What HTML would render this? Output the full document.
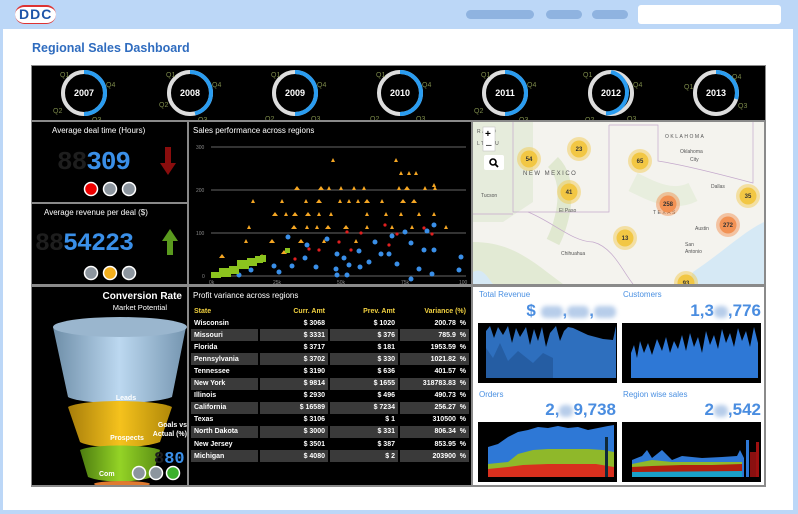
<!DOCTYPE html>
<html><head><meta charset="utf-8"><style>
*{margin:0;padding:0;box-sizing:border-box}
body{width:798px;height:514px;background:#bcd7f7;font-family:"Liberation Sans",sans-serif;position:relative;overflow:hidden}
.a{position:absolute}
.pill{position:absolute;height:9px;border-radius:5px;background:#8fb3e0}
.panel{position:absolute;background:#000}
.t{color:#fff;font-size:8px;position:absolute;white-space:nowrap}
table{border-collapse:collapse;font-size:7px;font-weight:bold;color:#fff;width:100%;table-layout:fixed}
td{height:12.1px;padding:0 3px;border-right:2px solid #000}
tr:nth-child(odd) td{background:#3a3a3a}
tr:nth-child(even) td{background:#000}
td.r{text-align:right}
.lbl{color:#4a90e2;font-size:8px;position:absolute}
.big{color:#4a8de0;font-size:17px;font-weight:bold;position:absolute;text-align:right}
.blur{display:inline-block;width:22px;height:12px;background:#b7cdea;border-radius:5px;filter:blur(2px);vertical-align:middle}
</style></head><body>
<!-- top bar -->
<div class="a" style="left:15px;top:5px;width:41px;height:19px;background:#fff;border-radius:10px;border-top:2px solid #d33;border-bottom:1px solid #d33"></div>
<div class="a" style="left:19px;top:6px;font-weight:bold;font-size:14px;color:#1f55a8;letter-spacing:1px">DDC</div>
<div class="pill" style="left:466px;top:10px;width:68px"></div>
<div class="pill" style="left:546px;top:10px;width:36px"></div>
<div class="pill" style="left:592px;top:10px;width:36px"></div>
<div class="a" style="left:638px;top:5px;width:143px;height:19px;background:#fff;border-radius:3px"></div>
<!-- white sheet -->
<div class="a" style="left:3px;top:29px;width:790px;height:481px;background:#fff"></div>
<div class="a" style="left:32px;top:41px;font-size:12.5px;font-weight:bold;color:#2f6cbf">Regional Sales Dashboard</div>
<!-- dashboard frame -->
<div class="a" style="left:31px;top:65px;width:735px;height:422px;background:#8a8a8a"></div>
<!-- gauges row -->
<div class="panel" style="left:32px;top:66px;width:733px;height:54px"></div>
<svg class="a" style="left:32px;top:66px" width="733" height="54">
<g stroke-width="4" fill="none">
<g transform="translate(52,27)"><circle r="21" stroke="#ddd"/><path d="M0,-21 A21,21 0 0 1 0,21" stroke="#2a9cf0"/><text x="0" y="3" fill="#fff" stroke="none" font-size="9" font-weight="bold" text-anchor="middle">2007</text><text x="-24" y="-16" font-size="7" fill="#7c8a4a" stroke="none">Q1</text><text x="22" y="-6" font-size="7" fill="#7c8a4a" stroke="none">Q4</text><text x="-31" y="20" font-size="7" fill="#7c8a4a" stroke="none">Q2</text><text x="8" y="29" font-size="7" fill="#7c8a4a" stroke="none">Q3</text></g>
<g transform="translate(158,27)"><circle r="21" stroke="#ddd"/><path d="M0,-21 A21,21 0 0 1 5,20.4" stroke="#2a9cf0"/><text x="0" y="3" fill="#fff" stroke="none" font-size="9" font-weight="bold" text-anchor="middle">2008</text><text x="-24" y="-16" font-size="7" fill="#7c8a4a" stroke="none">Q1</text><text x="22" y="-6" font-size="7" fill="#7c8a4a" stroke="none">Q4</text><text x="-31" y="14" font-size="7" fill="#7c8a4a" stroke="none">Q2</text><text x="8" y="29" font-size="7" fill="#7c8a4a" stroke="none">Q3</text></g>
<g transform="translate(263,27)"><circle r="21" stroke="#ddd"/><path d="M0,-21 A21,21 0 0 1 0,21" stroke="#2a9cf0"/><text x="0" y="3" fill="#fff" stroke="none" font-size="9" font-weight="bold" text-anchor="middle">2009</text><text x="-24" y="-16" font-size="7" fill="#7c8a4a" stroke="none">Q1</text><text x="22" y="-6" font-size="7" fill="#7c8a4a" stroke="none">Q4</text><text x="-30" y="28" font-size="7" fill="#7c8a4a" stroke="none">Q2</text><text x="16" y="28" font-size="7" fill="#7c8a4a" stroke="none">Q3</text></g>
<g transform="translate(368,27)"><circle r="21" stroke="#ddd"/><path d="M0,-21 A21,21 0 0 1 0,21" stroke="#2a9cf0"/><text x="0" y="3" fill="#fff" stroke="none" font-size="9" font-weight="bold" text-anchor="middle">2010</text><text x="-24" y="-16" font-size="7" fill="#7c8a4a" stroke="none">Q1</text><text x="22" y="-6" font-size="7" fill="#7c8a4a" stroke="none">Q4</text><text x="-30" y="28" font-size="7" fill="#7c8a4a" stroke="none">Q2</text><text x="16" y="28" font-size="7" fill="#7c8a4a" stroke="none">Q3</text></g>
<g transform="translate(473,27)"><circle r="21" stroke="#ddd"/><path d="M0,-21 A21,21 0 0 1 0,21" stroke="#2a9cf0"/><text x="0" y="3" fill="#fff" stroke="none" font-size="9" font-weight="bold" text-anchor="middle">2011</text><text x="-24" y="-16" font-size="7" fill="#7c8a4a" stroke="none">Q1</text><text x="22" y="-6" font-size="7" fill="#7c8a4a" stroke="none">Q4</text><text x="-31" y="20" font-size="7" fill="#7c8a4a" stroke="none">Q2</text><text x="14" y="29" font-size="7" fill="#7c8a4a" stroke="none">Q3</text></g>
<g transform="translate(579,27)"><circle r="21" stroke="#ddd"/><path d="M0,-21 A21,21 0 0 1 -5,20.4" stroke="#2a9cf0"/><text x="0" y="3" fill="#fff" stroke="none" font-size="9" font-weight="bold" text-anchor="middle">2012</text><text x="-28" y="-16" font-size="7" fill="#7c8a4a" stroke="none">Q1</text><text x="22" y="-6" font-size="7" fill="#7c8a4a" stroke="none">Q4</text><text x="-26" y="29" font-size="7" fill="#7c8a4a" stroke="none">Q2</text><text x="16" y="28" font-size="7" fill="#7c8a4a" stroke="none">Q3</text></g>
<g transform="translate(684,27)"><circle r="21" stroke="#ddd"/><path d="M0,-21 A21,21 0 0 1 20,6" stroke="#2a9cf0"/><text x="0" y="3" fill="#fff" stroke="none" font-size="9" font-weight="bold" text-anchor="middle">2013</text><text x="-32" y="-4" font-size="7" fill="#7c8a4a" stroke="none">Q1</text><text x="16" y="-14" font-size="7" fill="#7c8a4a" stroke="none">Q4</text><text x="22" y="15" font-size="7" fill="#7c8a4a" stroke="none">Q3</text><text x="10" y="32" font-size="7" fill="#7c8a4a" stroke="none">Q2</text></g>
</g></svg>
<!-- left KPIs -->
<div class="panel" style="left:32px;top:122px;width:155px;height:80px"></div>
<div class="t" style="left:52px;top:126px">Average deal time (Hours)</div>
<div class="a" style="left:57px;top:147px;font-family:'Liberation Mono',monospace;font-weight:bold;font-size:26px;letter-spacing:-1px;color:#1e1e1e">88<span style="color:#3a8fe8">309</span></div>
<svg class="a" style="left:160px;top:147px" width="16" height="28"><path d="M5,0h6v16h5l-8,12l-8,-12h5z" fill="#8a0d0d"/></svg>
<svg class="a" style="left:83px;top:181px" width="58" height="16"><circle cx="8" cy="8" r="6.5" fill="#e00" stroke="#fff" stroke-width="1.5"/><circle cx="27" cy="8" r="6.5" fill="#8c959e" stroke="#fff" stroke-width="1.5"/><circle cx="46" cy="8" r="6.5" fill="#8c959e" stroke="#fff" stroke-width="1.5"/></svg>
<div class="panel" style="left:32px;top:204px;width:155px;height:80px"></div>
<div class="t" style="left:44px;top:208px">Average revenue per deal ($)</div>
<div class="a" style="left:35px;top:229px;font-family:'Liberation Mono',monospace;font-weight:bold;font-size:25px;letter-spacing:-1px;color:#1e1e1e">88<span style="color:#3a8fe8">54223</span></div>
<svg class="a" style="left:162px;top:229px" width="16" height="26"><path d="M8,0l8,12h-5v14h-6v-14h-5z" fill="#5a9a1e"/></svg>
<svg class="a" style="left:83px;top:265px" width="58" height="16"><circle cx="8" cy="8" r="6.5" fill="#8c959e" stroke="#fff" stroke-width="1.5"/><circle cx="27" cy="8" r="6.5" fill="#f2ae1c" stroke="#fff" stroke-width="1.5"/><circle cx="46" cy="8" r="6.5" fill="#8c959e" stroke="#fff" stroke-width="1.5"/></svg>
<!-- scatter -->
<div class="panel" style="left:189px;top:122px;width:282px;height:162px"></div>
<div class="t" style="left:193px;top:126px">Sales performance across regions</div>
<svg class="a" style="left:189px;top:122px" width="282" height="162" font-family="Liberation Sans" font-size="5" fill="#888">
<g stroke="#888" stroke-width="0.8"><line x1="22" y1="25" x2="277" y2="25"/><line x1="22" y1="68" x2="277" y2="68"/><line x1="22" y1="111" x2="277" y2="111"/><line x1="22" y1="154" x2="277" y2="154"/></g>
<text x="7" y="27">300</text><text x="7" y="70">200</text><text x="7" y="113">100</text><text x="13" y="156">0</text>
<text x="20" y="162">0k</text><text x="84" y="162">25k</text><text x="148" y="162">50k</text><text x="212" y="162">75k</text><text x="270" y="162">100</text>
<g fill="#f5a623">
<path d="M144,36l2,4h-4z M207,36l2,4h-4z M212,49l2,4h-4z M220,49l2,4h-4z M227,49l2,4h-4z M245,61l2,4h-4z M108,64l3,4h-6z M132,64l3,4h-6z M140,64l2,4h-4z M152,64l2,4h-4z M165,64l2,4h-4z M175,64l2,4h-4z M210,64l2,4h-4z M218,64l3,4h-6z M236,64l2,4h-4z M246,64l2,4h-4z M64,77l2,4h-4z M93,77l2,4h-4z M117,77l2,4h-4z M130,77l3,4h-6z M151,77l2,4h-4z M160,77l2,4h-4z M169,77l2,4h-4z M178,77l3,4h-6z M193,77l2,4h-4z M214,77l3,4h-6z M225,77l3,4h-6z M86,90l3,4h-6z M97,90l2,4h-4z M106,90l3,4h-6z M119,90l3,4h-6z M130,90l2,4h-4z M142,90l2,4h-4z M178,90l2,4h-4z M197,90l2,4h-4z M212,90l2,4h-4z M230,90l2,4h-4z M245,90l2,4h-4z M60,103l2,4h-4z M105,103l3,4h-6z M118,103l2,4h-4z M128,103l2,4h-4z M139,103l3,4h-6z M157,103l3,4h-6z M178,103l2,4h-4z M203,103l2,4h-4z M223,103l2,4h-4z M257,103l2,4h-4z M57,117l2,4h-4z M83,117l3,4h-6z M112,117l3,4h-6z M135,117l2,4h-4z M167,117l2,4h-4z M33,132l3,4h-6z M73,132l3,4h-6z M95,128l3,4h-6z"/>
</g>
<g fill="#3a8fe8">
<circle cx="186" cy="120" r="2.5"/><circle cx="203" cy="114" r="2.5"/><circle cx="216" cy="110" r="2.5"/><circle cx="238" cy="109" r="2.5"/><circle cx="245" cy="103" r="2.5"/><circle cx="222" cy="121" r="2.5"/><circle cx="235" cy="128" r="2.5"/><circle cx="245" cy="128" r="2.5"/><circle cx="99" cy="115" r="2.5"/><circle cx="118" cy="123" r="2.5"/><circle cx="138" cy="117" r="2.5"/><circle cx="148" cy="132" r="2.5"/><circle cx="155" cy="136" r="2.5"/><circle cx="170" cy="129" r="2.5"/><circle cx="192" cy="132" r="2.5"/><circle cx="200" cy="132" r="2.5"/><circle cx="180" cy="140" r="2.5"/><circle cx="116" cy="136" r="2.5"/><circle cx="85" cy="144" r="2.5"/><circle cx="103" cy="144" r="2.5"/><circle cx="127" cy="145" r="2.5"/><circle cx="147" cy="147" r="2.5"/><circle cx="160" cy="143" r="2.5"/><circle cx="171" cy="145" r="2.5"/><circle cx="208" cy="142" r="2.5"/><circle cx="230" cy="147" r="2.5"/><circle cx="222" cy="157" r="2.5"/><circle cx="35" cy="149" r="2.5"/><circle cx="62" cy="148" r="2.5"/><circle cx="90" cy="150" r="2.5"/><circle cx="50" cy="153" r="2.5"/><circle cx="270" cy="148" r="2.5"/><circle cx="272" cy="135" r="2.5"/><circle cx="148" cy="153" r="2.5"/><circle cx="158" cy="153" r="2.5"/><circle cx="243" cy="152" r="2.5"/>
</g>
<g fill="#e02020"><circle cx="196" cy="103" r="1.6"/><circle cx="208" cy="112" r="1.6"/><circle cx="235" cy="106" r="1.6"/><circle cx="243" cy="112" r="1.6"/><circle cx="158" cy="110" r="1.6"/><circle cx="172" cy="111" r="1.6"/><circle cx="150" cy="120" r="1.6"/><circle cx="162" cy="128" r="1.6"/><circle cx="130" cy="128" r="1.6"/><circle cx="120" cy="127" r="1.6"/><circle cx="106" cy="137" r="1.6"/><circle cx="200" cy="123" r="1.6"/></g>
<g fill="#8bc31e"><path d="M22,150h10v6h-10z M30,146h12v9h-12z M40,144h10v8h-10z M48,138h12v9h-12z M58,136h10v8h-10z M66,134h8v7h-8z M71,133h6v7h-6z M96,126h5v5h-5z"/></g>
</svg>
<!-- map -->
<div class="a" style="left:473px;top:122px;width:291px;height:162px;background:#f4f3ee;overflow:hidden">
<svg width="291" height="162" style="position:absolute;left:0;top:0" font-family="Liberation Sans">
<path d="M0,0h60v80l-30,20l-30,0z" fill="#e6ecdc"/><path d="M80,40c20,20 10,60 0,80" stroke="#e0e8d0" stroke-width="14" fill="none"/>
<path d="M0,120 C40,120 60,140 90,162 L0,162z" fill="#e2ead4"/><path d="M220,150 C250,130 270,110 291,100 V162 H215z" fill="#d6e9f5"/>
<path d="M0,150 C10,145 14,155 20,162 H0z" fill="#d6e9f5"/>
<path d="M160,60c20,10 40,20 60,10" stroke="#e8eede" stroke-width="20" fill="none"/>
<g stroke="#c4a9cc" stroke-width="0.7" fill="none"><path d="M40,0v90h96v-87"/><path d="M0,92h40"/><path d="M136,3h49v36c20,3 50,10 95,22v-61"/><path d="M55,90 C80,100 100,120 120,120 C140,125 150,150 160,162"/></g>
<g font-size="5" fill="#555"><text x="4" y="11" letter-spacing="1.5">RADO</text><text x="4" y="23" letter-spacing="1.5">LTEAU</text><text x="50" y="53" font-size="6" letter-spacing="1.5">NEW MEXICO</text><text x="192" y="16" letter-spacing="1.5">OKLAHOMA</text><text x="207" y="31">Oklahoma</text><text x="217" y="39">City</text><text x="238" y="66">Dallas</text><text x="8" y="75">Tucson</text><text x="86" y="90">El Paso</text><text x="222" y="108">Austin</text><text x="212" y="124">San</text><text x="212" y="131">Antonio</text><text x="88" y="133">Chihuahua</text><text x="180" y="92" letter-spacing="1.5">TEXAS</text></g>
<g font-size="6" font-weight="bold" text-anchor="middle" fill="#333">
<circle cx="56" cy="37" r="12" fill="#f2c744" opacity=".45"/><circle cx="56" cy="37" r="8.5" fill="#f2c744"/><text x="56" y="39">54</text>
<circle cx="106" cy="27" r="12" fill="#f2c744" opacity=".45"/><circle cx="106" cy="27" r="8.5" fill="#f2c744"/><text x="106" y="29">23</text>
<circle cx="167" cy="39" r="12" fill="#f2c744" opacity=".45"/><circle cx="167" cy="39" r="8.5" fill="#f2c744"/><text x="167" y="41">65</text>
<circle cx="96" cy="70" r="12" fill="#f2c744" opacity=".45"/><circle cx="96" cy="70" r="8.5" fill="#f2c744"/><text x="96" y="72">41</text>
<circle cx="195" cy="82" r="12" fill="#f28a44" opacity=".45"/><circle cx="195" cy="82" r="8.5" fill="#f29254"/><text x="195" y="84">258</text>
<circle cx="275" cy="74" r="12" fill="#f2c744" opacity=".45"/><circle cx="275" cy="74" r="8.5" fill="#f2c744"/><text x="275" y="76">35</text>
<circle cx="255" cy="103" r="12" fill="#f28a44" opacity=".45"/><circle cx="255" cy="103" r="8.5" fill="#f29254"/><text x="255" y="105">272</text>
<circle cx="152" cy="116" r="12" fill="#f2c744" opacity=".45"/><circle cx="152" cy="116" r="8.5" fill="#f2c744"/><text x="152" y="118">13</text>
<circle cx="213" cy="161" r="12" fill="#f2c744" opacity=".45"/><circle cx="213" cy="161" r="8.5" fill="#f2c744"/><text x="213" y="163">93</text>
</g>
<rect x="10" y="5" width="12" height="24" fill="#fff" stroke="#bbb" stroke-width=".5"/><text x="12" y="15" font-size="10" font-weight="bold">+</text><text x="13" y="26" font-size="10">–</text>
<rect x="11" y="33" width="20" height="15" fill="#fff" rx="2"/><circle cx="20" cy="40" r="3" fill="none" stroke="#000" stroke-width="1.6"/><path d="M22,42l3,3" stroke="#000" stroke-width="1.8"/>
</svg></div>
<!-- funnel -->
<div class="panel" style="left:32px;top:287px;width:155px;height:198px"></div>
<svg class="a" style="left:32px;top:287px" width="155" height="198">
<defs>
<linearGradient id="f1" x1="0" x2="1"><stop offset="0" stop-color="#6e8ea8"/><stop offset=".5" stop-color="#bcd8f0"/><stop offset="1" stop-color="#7595b0"/></linearGradient>
<linearGradient id="f2" x1="0" x2="1"><stop offset="0" stop-color="#a77d0a"/><stop offset=".5" stop-color="#f5c21d"/><stop offset="1" stop-color="#b08808"/></linearGradient>
<linearGradient id="f3" x1="0" x2="1"><stop offset="0" stop-color="#4d7d10"/><stop offset=".5" stop-color="#94d326"/><stop offset="1" stop-color="#5b8f14"/></linearGradient>
</defs>
<path d="M21,40 C40,28 135,28 154,40 L140,110 C120,118 50,118 36,110z" fill="url(#f1)"/>
<ellipse cx="88" cy="40" rx="67" ry="10" fill="#9ab6ce"/>
<path d="M36,120 C50,112 125,112 140,120 L128,155 C110,162 60,162 48,155z" fill="url(#f2)"/>
<path d="M48,163 C60,157 115,157 128,163 L120,190 C105,196 70,196 56,190z" fill="url(#f3)"/>
<ellipse cx="90" cy="197" rx="28" ry="3" fill="#e07a30"/>
<text x="150" y="12" fill="#fff" font-size="10" font-weight="bold" text-anchor="end" font-family="Liberation Sans">Conversion Rate</text>
<text x="135" y="23" fill="#fff" font-size="7.5" text-anchor="end" font-family="Liberation Sans">Market Potential</text>
<text x="94" y="113" fill="#fff" font-size="7" font-weight="bold" text-anchor="middle" font-family="Liberation Sans">Leads</text>
<text x="95" y="153" fill="#fff" font-size="7" font-weight="bold" text-anchor="middle" font-family="Liberation Sans">Prospects</text>
<text x="155" y="140" fill="#fff" font-size="7" font-weight="bold" text-anchor="end" font-family="Liberation Sans">Goals vs</text>
<text x="155" y="149" fill="#fff" font-size="7" font-weight="bold" text-anchor="end" font-family="Liberation Sans">Actual (%)</text>
<text x="67" y="189" fill="#fff" font-size="7" font-weight="bold" font-family="Liberation Sans">Com</text>
<text x="122" y="176" fill="#1e1e1e" font-size="17" font-weight="bold" font-family="Liberation Mono">8<tspan fill="#3a8fe8">8</tspan><tspan fill="#3a8fe8">0</tspan></text>
<circle cx="107" cy="186" r="6.5" fill="#8c959e" stroke="#fff" stroke-width="1.5"/><circle cx="124" cy="186" r="6.5" fill="#8c959e" stroke="#fff" stroke-width="1.5"/><circle cx="141" cy="186" r="6.5" fill="#3cb02c" stroke="#fff" stroke-width="1.5"/>
</svg>
<!-- table -->
<div class="panel" style="left:189px;top:287px;width:282px;height:198px"></div>
<div class="t" style="left:193px;top:291px">Profit variance across regions</div>
<div class="a" style="left:191px;top:305px;width:279px">
<table>
<colgroup><col style="width:68px"><col style="width:70px"><col style="width:70px"><col style="width:71px"></colgroup>
<tr><td style="color:#f0d040;background:#000">State</td><td class="r" style="color:#f0d040;background:#000">Curr. Amt</td><td class="r" style="color:#f0d040;background:#000">Prev. Amt</td><td class="r" style="color:#f0d040;background:#000">Variance (%)</td></tr>
<tr><td>Wisconsin</td><td class="r">$ 3068</td><td class="r">$ 1020</td><td class="r">200.78 &nbsp;%</td></tr>
<tr><td>Missouri</td><td class="r">$ 3331</td><td class="r">$ 376</td><td class="r">785.9 &nbsp;%</td></tr>
<tr><td>Florida</td><td class="r">$ 3717</td><td class="r">$ 181</td><td class="r">1953.59 &nbsp;%</td></tr>
<tr><td>Pennsylvania</td><td class="r">$ 3702</td><td class="r">$ 330</td><td class="r">1021.82 &nbsp;%</td></tr>
<tr><td>Tennessee</td><td class="r">$ 3190</td><td class="r">$ 636</td><td class="r">401.57 &nbsp;%</td></tr>
<tr><td>New York</td><td class="r">$ 9814</td><td class="r">$ 1655</td><td class="r">318783.83 &nbsp;%</td></tr>
<tr><td>Illinois</td><td class="r">$ 2930</td><td class="r">$ 496</td><td class="r">490.73 &nbsp;%</td></tr>
<tr><td>California</td><td class="r">$ 16589</td><td class="r">$ 7234</td><td class="r">256.27 &nbsp;%</td></tr>
<tr><td>Texas</td><td class="r">$ 3106</td><td class="r">$ 1</td><td class="r">310500 &nbsp;%</td></tr>
<tr><td>North Dakota</td><td class="r">$ 3000</td><td class="r">$ 331</td><td class="r">806.34 &nbsp;%</td></tr>
<tr><td>New Jersey</td><td class="r">$ 3501</td><td class="r">$ 387</td><td class="r">853.95 &nbsp;%</td></tr>
<tr><td>Michigan</td><td class="r">$ 4080</td><td class="r">$ 2</td><td class="r">203900 &nbsp;%</td></tr>
</table></div>
<!-- KPI charts -->
<div class="a" style="left:473px;top:287px;width:291px;height:198px;background:#fff"></div>
<div class="lbl" style="left:479px;top:290px">Total Revenue</div>
<div class="lbl" style="left:623px;top:290px">Customers</div>
<div class="big" style="left:480px;top:301px;width:136px">$ <span class="blur"></span>,<span class="blur"></span>,<span class="blur"></span></div>
<div class="big" style="left:622px;top:301px;width:139px">1,3<span class="blur" style="width:14px"></span>,776</div>
<div class="lbl" style="left:479px;top:390px">Orders</div>
<div class="lbl" style="left:623px;top:390px">Region wise sales</div>
<div class="big" style="left:480px;top:400px;width:136px">2,<span class="blur" style="width:14px"></span>9,738</div>
<div class="big" style="left:622px;top:400px;width:139px">2<span class="blur" style="width:14px"></span>,542</div>
<svg class="a" style="left:478px;top:323px" width="139" height="60"><rect width="139" height="60" fill="#000"/><path d="M8,8 L12,3 16,15 20,4 25,12 30,3 34,20 38,5 42,14 48,4 52,22 56,6 60,18 64,4 68,24 72,10 78,3 82,18 86,8 90,4 95,5 110,12 125,16 135,17 138,3 V55 H8z" fill="#2e6fbe"/><path d="M8,25 L15,35 22,20 30,38 40,28 55,40 65,30 75,35 V55 H8z" fill="#255da3"/></svg>
<svg class="a" style="left:622px;top:323px" width="139" height="60"><rect width="139" height="60" fill="#000"/><path d="M9,30 L12,22 15,35 18,18 22,30 26,20 30,32 35,16 40,28 44,14 48,30 52,18 56,26 60,12 64,28 68,10 72,24 76,14 80,30 84,8 88,22 92,12 96,26 100,6 104,20 108,10 112,24 116,5 120,18 124,8 128,24 132,4 136,20 V55 H9z" fill="#2e78d6"/></svg>
<svg class="a" style="left:478px;top:422px" width="139" height="60"><rect width="139" height="60" fill="#000"/><path d="M10,50 V25 L20,22 30,15 40,10 50,8 60,5 70,6 80,4 90,6 100,5 110,8 120,6 130,4 136,3 V55 H10z" fill="#2e78d6"/><path d="M10,50 V42 L30,40 40,32 55,28 70,27 90,27 110,27 125,28 136,30 V55 H10z" fill="#8fb82a"/><path d="M10,55 V47 L30,45 45,43 70,42 95,42 118,42 130,44 136,45 V55 H10z" fill="#d8301e"/><rect x="127" y="15" width="3" height="40" fill="#0f2a3a"/></svg>
<svg class="a" style="left:622px;top:422px" width="139" height="60"><rect width="139" height="60" fill="#000"/><path d="M10,52 V38 L20,34 25,28 30,36 40,28 50,38 60,34 80,36 100,35 115,34 118,28 122,36 V55 H10z" fill="#2e78d6"/><path d="M10,52 V42 L30,38 50,40 80,40 100,40 120,40 V55 H10z" fill="#8fb82a"/><path d="M10,52 V45 L30,44 60,43 90,43 120,42 V55 H10z" fill="#b0200e"/><path d="M10,55 V50 L120,49 V55 z" fill="#1aa0c8"/><rect x="124" y="18" width="3" height="37" fill="#2e78d6"/><rect x="128" y="30" width="6" height="25" fill="#8a1010"/><rect x="134" y="20" width="3" height="35" fill="#a01010"/></svg>
</body></html>
